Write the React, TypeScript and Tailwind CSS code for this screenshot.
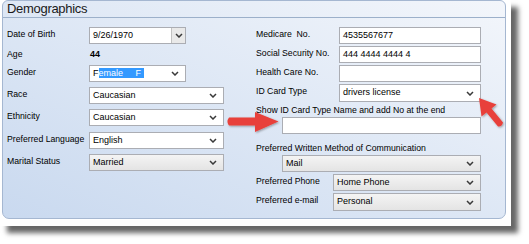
import React from "react";

function Chevron() {
  return (
    <svg width="8" height="5" viewBox="0 0 8 5" className="shrink-0">
      <path d="M1 1 L4 4 L7 1" fill="none" stroke="#3a3a3a" strokeWidth="1.5" />
    </svg>
  );
}

function Select({
  value,
  width,
  gray,
  height = "h-[17px]",
}: {
  value: React.ReactNode;
  width: string;
  gray?: boolean;
  height?: string;
}) {
  return (
    <div
      className={`${width} ${height} flex items-center justify-between border border-[#abadb3] pl-[3px] pr-[6px] text-[9px] text-black ${
        gray ? "bg-linear-to-b from-[#f4f4f4] to-[#e4e4e4]" : "bg-white"
      }`}
    >
      <span className="whitespace-pre">{value}</span>
      <Chevron />
    </div>
  );
}

function TextBox({ value, width }: { value?: string; width: string }) {
  return (
    <div
      className={`${width} h-[17px] flex items-center border border-[#abadb3] bg-white pl-[3px] text-[9px] text-black`}
    >
      {value}
    </div>
  );
}

function Label({ text, width }: { text: string; width: string }) {
  return (
    <div className={`${width} shrink-0 pt-[2px] text-[8.7px] leading-[11px] text-black`}>
      {text}
    </div>
  );
}

export default function App() {
  return (
    <div className="relative w-[529px] h-[244px] bg-white font-['Liberation_Sans',Arial,sans-serif]">
      <div className="w-[511px] h-[226px] bg-white pl-[2px] shadow-[7px_7px_5px_rgba(0,0,0,0.6)]">
        <div className="w-[504px] h-[219px] flex flex-col rounded-t-[6px] rounded-b-[7px] border border-[#a5b7d1] bg-linear-to-tr from-[#c9d9ef] to-[#f3f6fb]">
          {/* header */}
          <div className="h-[17px] shrink-0 border-b border-[#9cb0ca] pl-[4px] text-[13px] leading-[15px] tracking-[-0.3px] text-[#1a1a1a]">
            Demographics
          </div>

          <div className="flex pl-[4px]">
            {/* left column */}
            <div className="w-[217px] flex flex-col">
              <div className="mt-[9px] flex h-[17px] items-start">
                <Label text="Date of Birth" width="w-[82px]" />
                <div className="w-[97px] h-[17px] flex border border-[#abadb3] bg-white text-[9px]">
                  <div className="flex-1 pl-[3px] flex items-center">9/26/1970</div>
                  <div className="w-[14px] flex items-center justify-center border-l border-[#c2c2c2] bg-[#e9e9e9]">
                    <Chevron />
                  </div>
                </div>
              </div>
              <div className="flex h-[17px] items-start">
                <div className="w-[82px] shrink-0 pt-[5px] text-[8.7px] leading-[11px] text-black">Age</div>
                <div className="pt-[5px] pl-[1px] text-[9px] leading-[11px] font-bold">44</div>
              </div>
              <div className="mt-[4px] flex h-[17px] items-start">
                <Label text="Gender" width="w-[82px]" />
                <Select
                  width="w-[97px]"
                  value={
                    <>
                      F
                      <span className="bg-[#3399ff] text-white">{"emale     F "}</span>
                    </>
                  }
                />
              </div>
              <div className="mt-[5px] flex h-[17px] items-start">
                <Label text="Race" width="w-[82px]" />
                <Select width="w-[135px]" value="Caucasian" />
              </div>
              <div className="mt-[5px] flex h-[17px] items-start">
                <Label text="Ethnicity" width="w-[82px]" />
                <Select width="w-[135px]" value="Caucasian" />
              </div>
              <div className="mt-[6px] flex h-[17px] items-start">
                <Label text="Preferred Language" width="w-[82px]" />
                <Select width="w-[135px]" value="English" />
              </div>
              <div className="mt-[5px] flex h-[17px] items-start">
                <Label text="Marital Status" width="w-[82px]" />
                <Select width="w-[135px]" value="Married" gray />
              </div>
            </div>

            {/* right column */}
            <div className="ml-[32px] w-[225px] flex flex-col">
              <div className="mt-[9px] flex h-[17px] items-start">
                <Label text="Medicare  No." width="w-[83px] whitespace-pre" />
                <TextBox width="w-[142px]" value="4535567677" />
              </div>
              <div className="mt-[2px] flex h-[17px] items-start">
                <Label text="Social Security No." width="w-[83px]" />
                <TextBox width="w-[142px]" value="444 4444 4444 4" />
              </div>
              <div className="mt-[2px] flex h-[17px] items-start">
                <Label text="Health Care No." width="w-[83px]" />
                <TextBox width="w-[142px]" />
              </div>
              <div className="mt-[2px] flex h-[18px] items-start">
                <Label text="ID Card Type" width="w-[83px]" />
                <Select width="w-[142px]" height="h-[18px]" value="drivers license" />
              </div>
              <div className="mt-[3px] text-[8.7px] leading-[11px] text-black">
                Show ID Card Type Name and add No at the end
              </div>
              <div className="mt-[1px] ml-[26px]">
                <TextBox width="w-[199px]" />
              </div>
              <div className="mt-[9px] text-[8.7px] leading-[11px] text-black">
                Preferred Written Method of Communication
              </div>
              <div className="mt-[1px] ml-[26px]">
                <Select width="w-[199px]" value="Mail" gray />
              </div>
              <div className="mt-[2px] flex h-[17px] items-start">
                <Label text="Preferred Phone" width="w-[77px]" />
                <Select width="w-[148px]" value="Home Phone" gray />
              </div>
              <div className="mt-[2px] flex h-[18px] items-start">
                <Label text="Preferred e-mail" width="w-[77px]" />
                <Select width="w-[148px]" height="h-[18px]" value="Personal" gray />
              </div>
            </div>
          </div>
        </div>
      </div>

      {/* annotation arrows */}
      <svg className="pointer-events-none absolute inset-0" width="529" height="244" viewBox="0 0 529 244">
        <defs>
          <filter id="ds" x="-20%" y="-20%" width="140%" height="140%">
            <feDropShadow dx="1" dy="1" stdDeviation="0.8" floodColor="#000" floodOpacity="0.35" />
          </filter>
        </defs>
        <path
          d="M229 117.5 L255 117.5 L255 112 L278.5 121.5 L255 132 L255 125.5 L229 125.5 Q226 121.5 229 117.5 Z"
          fill="#e8413b"
          filter="url(#ds)"
        />
        <path
          d="M479 98 L496.5 104.5 L491.5 108.5 L503 122.5 Q502 127 498 126.5 L486.5 112.5 L481.5 116.5 Z"
          fill="#e8413b"
          filter="url(#ds)"
        />
      </svg>
    </div>
  );
}
